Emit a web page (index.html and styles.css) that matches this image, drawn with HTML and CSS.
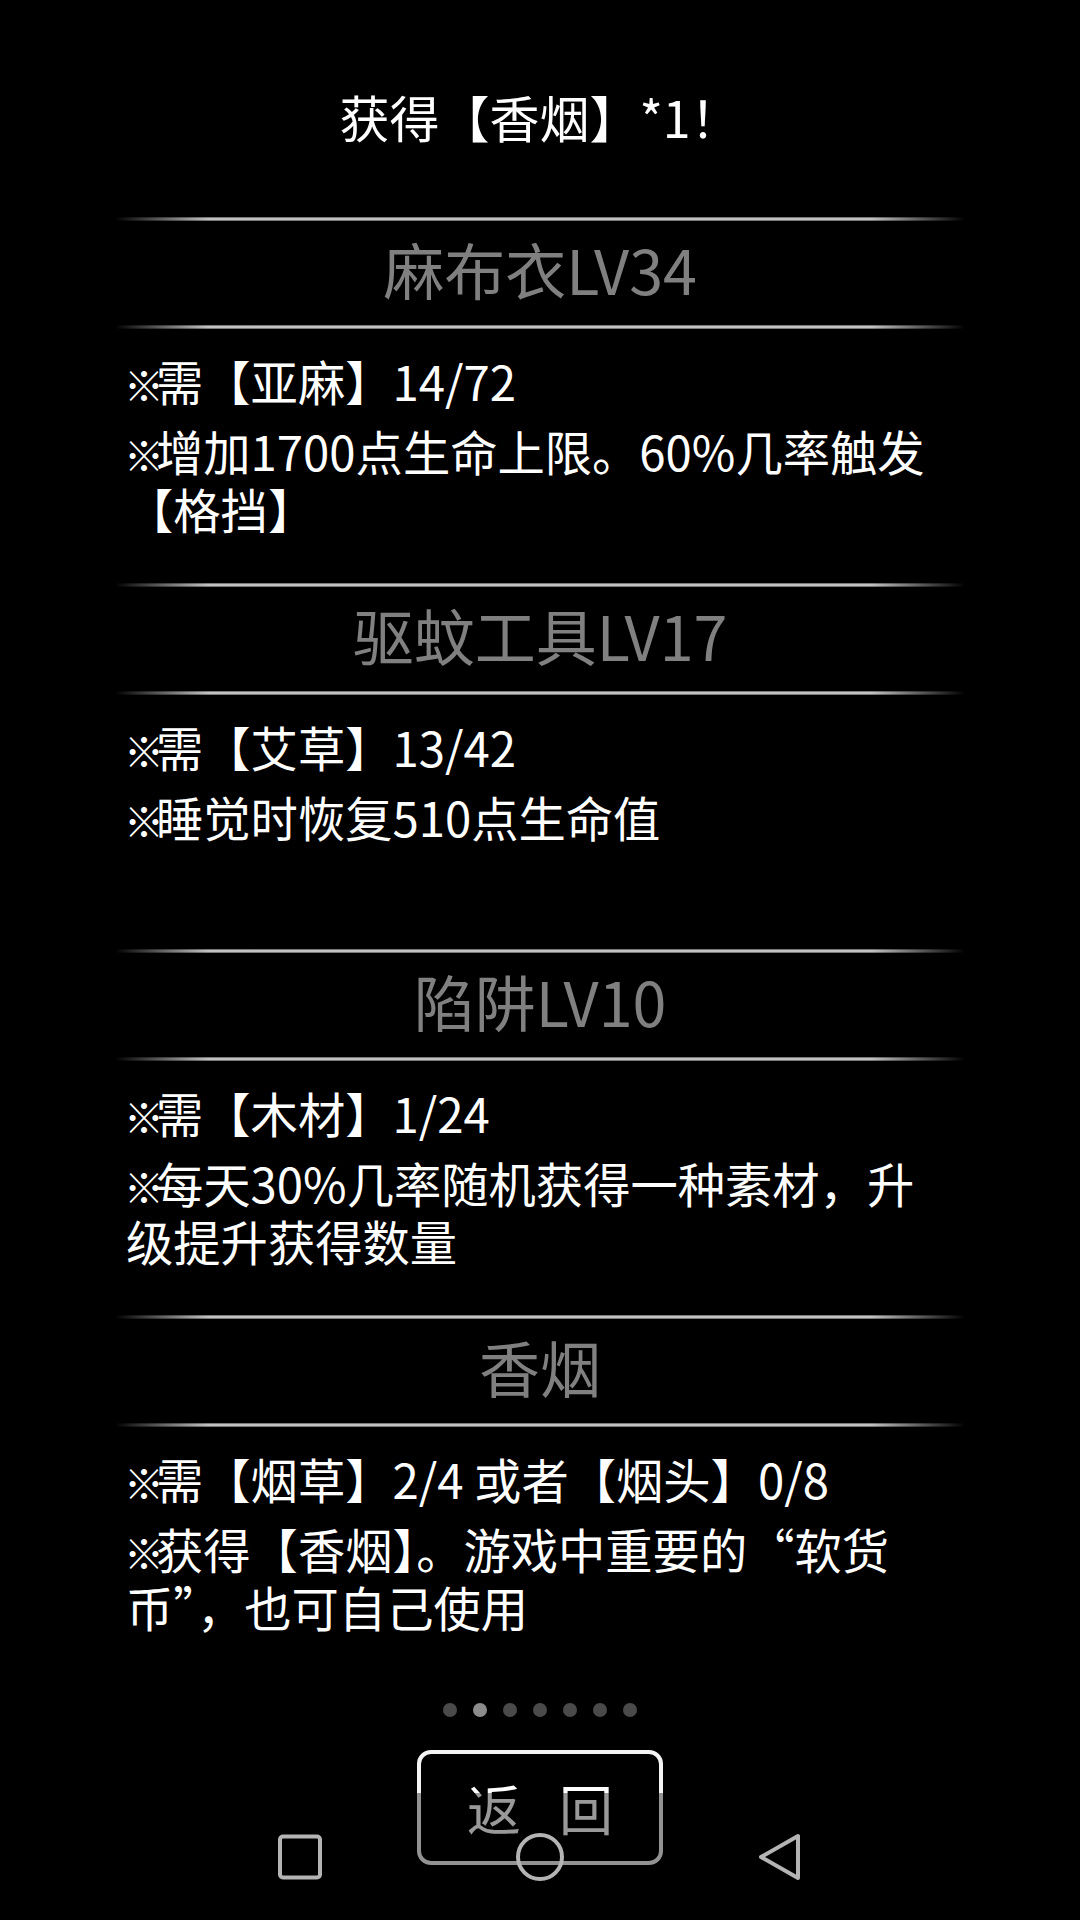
FILE: index.html
```html
<!DOCTYPE html>
<html lang="zh-CN">
<head>
<meta charset="utf-8">
<title>技能</title>
<link rel="stylesheet" href="styles.css">
</head>
<body>
<div class="screen">
  <h1 class="notice">获得【香烟】*1！</h1>

  <ul class="skills">
    <li class="skill">
      <div class="rule"></div>
      <h2 class="skill-name">麻布衣LV34</h2>
      <div class="rule"></div>
      <div class="skill-body">
        <p><span class="mark">※</span>需【亚麻】14/72</p>
        <p><span class="mark">※</span>增加1700点生命上限。60%几率触发【格挡】</p>
      </div>
    </li>
    <li class="skill">
      <div class="rule"></div>
      <h2 class="skill-name">驱蚊工具LV17</h2>
      <div class="rule"></div>
      <div class="skill-body">
        <p><span class="mark">※</span>需【艾草】13/42</p>
        <p><span class="mark">※</span>睡觉时恢复510点生命值</p>
      </div>
    </li>
    <li class="skill">
      <div class="rule"></div>
      <h2 class="skill-name">陷阱LV10</h2>
      <div class="rule"></div>
      <div class="skill-body">
        <p><span class="mark">※</span>需【木材】1/24</p>
        <p><span class="mark">※</span>每天30%几率随机获得一种素材，升级提升获得数量</p>
      </div>
    </li>
    <li class="skill">
      <div class="rule"></div>
      <h2 class="skill-name">香烟</h2>
      <div class="rule"></div>
      <div class="skill-body">
        <p><span class="mark">※</span>需【烟草】2/4 或者【烟头】0/8</p>
        <p><span class="mark">※</span>获得【香烟】。游戏中重要的“软货币”，也可自己使用</p>
      </div>
    </li>
  </ul>

  <div class="pager">
    <span class="dot"></span>
    <span class="dot on"></span>
    <span class="dot"></span>
    <span class="dot"></span>
    <span class="dot"></span>
    <span class="dot"></span>
    <span class="dot"></span>
  </div>

  <button class="back" type="button">返 回</button>

  <nav class="navbar">
    <svg class="nav-icon" viewBox="0 0 60 60" width="60" height="60" aria-label="recent">
      <rect x="10" y="9.5" width="40" height="41" rx="3"/>
    </svg>
    <svg class="nav-icon" viewBox="0 0 60 60" width="60" height="60" aria-label="home">
      <circle cx="30" cy="30" r="22"/>
    </svg>
    <svg class="nav-icon" viewBox="0 0 60 60" width="60" height="60" aria-label="back">
      <path d="M11 30 L48 9 L48 51 Z"/>
    </svg>
  </nav>
</div>
</body>
</html>
```

FILE: styles.css
```css
html,
body {
  margin: 0;
  background: #000;
}

body {
  width: 1080px;
  height: 1920px;
  overflow: hidden;
  color: #fff;
  font-family: "Noto Sans CJK SC", "Noto Sans", sans-serif;
}

.screen {
  position: relative;
  height: 1920px;
  display: flex;
  flex-direction: column;
  align-items: center;
}

/* reward message at the top */
.notice {
  margin: 86px 0 0;
  height: 60px;
  font-size: 50px;
  font-weight: 400;
  line-height: 60px;
}

/* skill list */
.skills {
  list-style: none;
  margin: 71px 0 0;
  padding: 0;
  width: 850px;
}

.skill {
  display: flex;
  flex-direction: column;
  height: 366px;
}

.rule {
  height: 4px;
  background: linear-gradient(#555, #e6e6e6 50%, #555);
  -webkit-mask-image: linear-gradient(to right, transparent, #000 11%, #000 89%, transparent);
  mask-image: linear-gradient(to right, transparent, #000 11%, #000 89%, transparent);
}

.skill-name {
  height: 104px;
  margin: 0;
  font-size: 61px;
  font-weight: 400;
  line-height: 96px;
  text-align: center;
  color: #808080;
}

.skill-body {
  flex: 1;
  padding: 23px 15px 0 11px;
}

.skill-body p {
  margin: 0 0 12px;
  font-size: 47.3px;
  line-height: 58px;
}

/* the reference mark sits in a narrower cell than the CJK text */
.mark {
  font-size: 40px;
  line-height: 40px;
  letter-spacing: -10px;
  margin-left: -2px;
  margin-right: 2px;
}

/* page indicator */
.pager {
  display: flex;
  gap: 16px;
  margin-top: 22px;
}

.dot {
  width: 14px;
  height: 14px;
  border-radius: 50%;
  background: #4a4a4a;
}

.dot.on {
  background: #8c8c8c;
}

/* return button */
.back {
  margin-top: 33px;
  width: 246px;
  height: 115px;
  box-sizing: border-box;
  border: 4px solid #f4f4f4;
  border-radius: 14px;
  background: #000;
  color: #fff;
  font-family: "Noto Sans CJK SC", sans-serif;
  font-size: 54px;
  word-spacing: 26px;
  padding: 0;
}

/* system navigation bar, dims what lies beneath it */
.navbar {
  position: absolute;
  left: 0;
  right: 0;
  bottom: 0;
  height: 127px;
  background: rgba(0, 0, 0, 0.4);
  display: flex;
  justify-content: center;
  align-items: center;
  gap: 180px;
}

.nav-icon {
  fill: none;
  stroke: #b4b4b4;
  stroke-width: 4;
  stroke-linejoin: round;
}
```
